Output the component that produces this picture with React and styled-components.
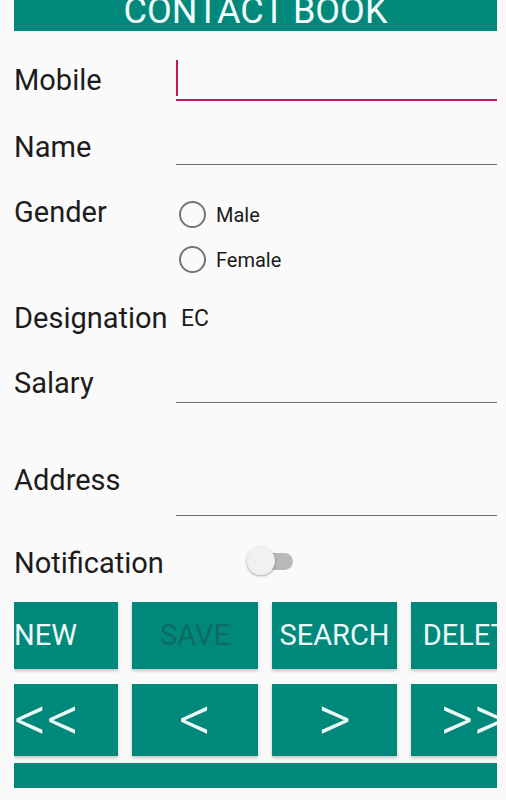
import styled, { createGlobalStyle } from "styled-components"

const teal = '#00897b'

const GlobalStyle = createGlobalStyle`
    html, body {
        margin: 0;
        padding: 0;
        background: #fafafa;
    }
    body {
        font-family: Roboto, 'Noto Sans', sans-serif;
        color: #111;
    }
`

const App = () => {
    return (
        <>
            <GlobalStyle />
            <Page>
                <Header>
                    <Title>CONTACT BOOK</Title>
                </Header>

                <Row height={79}>
                    <Label offset={35}>Mobile</Label>
                    <Field offset={26} focused>
                        <Caret />
                    </Field>
                </Row>

                <Row height={60}>
                    <Label offset={23}>Name</Label>
                    <Field offset={15} />
                </Row>

                <Row height={120}>
                    <Label offset={28}>Gender</Label>
                    <RadioGroup offset={22}>
                        <RadioItem>
                            <RadioCircle />
                            <RadioText>Male</RadioText>
                        </RadioItem>
                        <RadioItem>
                            <RadioCircle />
                            <RadioText>Female</RadioText>
                        </RadioItem>
                    </RadioGroup>
                </Row>

                <Row height={60}>
                    <Label offset={14}>Designation</Label>
                    <Value offset={17}>EC</Value>
                </Row>

                <Row height={70}>
                    <Label offset={19}>Salary</Label>
                    <Field offset={13} />
                </Row>

                <Row height={110}>
                    <Label offset={46}>Address</Label>
                    <Field offset={56} />
                </Row>

                <Row height={60}>
                    <Label offset={19}>Notification</Label>
                    <Switch offset={17}>
                        <Track />
                        <Thumb />
                    </Switch>
                </Row>

                <ButtonRow offset={12} height={67}>
                    <Button align='left'>NEW</Button>
                    <Button disabled>SAVE</Button>
                    <Button>SEARCH</Button>
                    <Button>DELETE</Button>
                </ButtonRow>

                <ButtonRow offset={15} height={72}>
                    <Button align='left' big>&lt;&lt;</Button>
                    <Button big>&lt;</Button>
                    <Button big>&gt;</Button>
                    <Button big>&gt;&gt;</Button>
                </ButtonRow>

                <BottomBar />
            </Page>
        </>
    )
}

export default App

const Page = styled.div`
    width: 483px;
    margin-left: 14px;
    display: flex;
    flex-direction: column;
`

const Header = styled.div`
    height: 31px;
    background: ${teal};
    overflow: hidden;
    display: flex;
    justify-content: center;
`

const Title = styled.div`
    color: #f2fbfa;
    font-size: 36px;
    line-height: 23px;
    white-space: nowrap;
`

const Row = styled.div`
    height: ${props => props.height}px;
    display: flex;
    align-items: flex-start;
`

const Label = styled.div`
    width: 162px;
    flex-shrink: 0;
    margin-top: ${props => props.offset}px;
    font-size: 29px;
    line-height: 1;
    white-space: nowrap;
    color: #1c1c1c;
`

const Field = styled.div`
    flex: 1;
    box-sizing: border-box;
    margin-top: ${props => props.offset}px;
    border-bottom: ${props => props.focused ? '2px solid #c2185b' : '1px solid #6f6f6f'};
    height: ${props => props.focused ? 44 : 40}px;
    display: flex;
    align-items: flex-start;
`

const Caret = styled.div`
    width: 2px;
    height: 36px;
    margin-top: 3px;
    background: #c2185b;
`

const RadioGroup = styled.div`
    margin-top: ${props => props.offset}px;
    display: flex;
    flex-direction: column;
`

const RadioItem = styled.div`
    height: 45px;
    display: flex;
    align-items: center;
    gap: 10px;
    padding-left: 3px;
`

const RadioCircle = styled.div`
    width: 27px;
    height: 27px;
    box-sizing: border-box;
    border: 2.5px solid #757575;
    border-radius: 50%;
`

const RadioText = styled.div`
    font-size: 20px;
    color: #1a1a1a;
`

const Value = styled.div`
    margin-top: ${props => props.offset}px;
    margin-left: 5px;
    font-size: 23px;
    line-height: 1;
    color: #1a1a1a;
`

const Switch = styled.div`
    position: relative;
    margin-top: ${props => props.offset}px;
    margin-left: 71px;
    width: 46px;
    height: 28px;
`

const Track = styled.div`
    position: absolute;
    left: 4px;
    top: 6px;
    width: 42px;
    height: 17px;
    border-radius: 9px;
    background: #b9b9b9;
`

const Thumb = styled.div`
    position: absolute;
    left: 0;
    top: 0;
    width: 28px;
    height: 28px;
    border-radius: 50%;
    background: #f1f1f1;
    box-shadow: 0 1px 3px rgba(0, 0, 0, 0.35);
`

const ButtonRow = styled.div`
    margin-top: ${props => props.offset}px;
    height: ${props => props.height}px;
    display: grid;
    grid-template-columns: 104px 126px 125px 125px;
    column-gap: 14px;
    overflow: hidden;
    padding-bottom: 4px;
    box-sizing: content-box;
    margin-bottom: -4px;
`

const Button = styled.div`
    height: 100%;
    background: ${teal};
    box-shadow: 0 2px 3px rgba(0, 0, 0, 0.22);
    display: flex;
    align-items: center;
    justify-content: ${props => props.align === 'left' ? 'flex-start' : 'center'};
    color: ${props => props.disabled ? '#0c6b60' : '#eef9f7'};
    font-size: ${props => props.big ? '64px' : '29px'};
    font-weight: ${props => props.big ? 300 : 400};
    line-height: 1;
    white-space: nowrap;
    overflow: visible;
`

const BottomBar = styled.div`
    margin-top: 7px;
    height: 25px;
    background: ${teal};
`
